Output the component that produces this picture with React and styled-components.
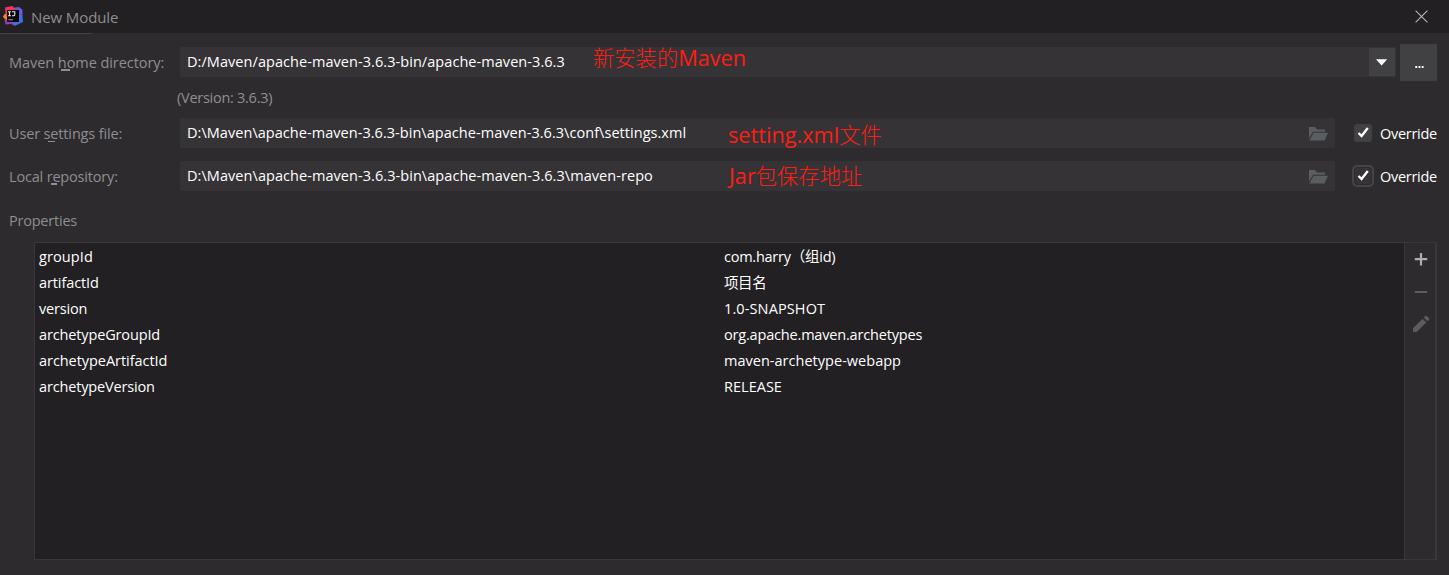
import React from "react";
import styled, { createGlobalStyle } from "styled-components";

const Global = createGlobalStyle`
  * { box-sizing: border-box; }
  body { margin: 0; background: #2d2b2e; }
`;

const Dialog = styled.div`
  height: 575px;
  display: flex;
  flex-direction: column;
  background: #2d2b2e;
  color: #fff;
  font: 14.5px/20px "Open Sans", "Noto Sans CJK SC", sans-serif;
  white-space: pre;
  overflow: hidden;
`;

const TitleBar = styled.header`
  height: 33px;
  flex: none;
  display: flex;
  align-items: center;
  padding: 0 21px 1px 3px;
  background: #222023;
`;

const Title = styled.span`
  flex: 1;
  margin-left: 8px;
  padding-top: 2px;
  font-size: 15px;
  letter-spacing: -0.1px;
  color: #8f8e90;
`;

const Accent = styled.div`
  width: 92px;
  height: 1px;
  flex: none;
  background: #414043;
`;

const Form = styled.section`
  display: flex;
  flex-direction: column;
  padding: 10px 12px 0 9px;
`;

const FormRow = styled.div`
  display: flex;
  align-items: center;
  height: ${(p) => p.$height}px;
  margin-bottom: ${(p) => p.$gap || 0}px;
`;

const Text = styled.span`
  letter-spacing: ${(p) => p.$track || 0}px;
  padding-top: ${(p) => p.$down || 0}px;
`;

const Label = styled(Text)`
  width: 171px;
  flex: none;
  color: #8f8e90;
`;

const Mnemonic = styled.span`
  position: relative;
  &::after {
    content: "";
    position: absolute;
    left: ${(p) => p.$inset || 0}px;
    bottom: ${(p) => p.$drop || 0}px;
    width: ${(p) => p.$width}px;
    height: ${(p) => p.$thick || 1}px;
    background: #8f8e90;
  }
`;

const Version = styled(Text)`
  margin: 7px 0 10px 168px;
  color: #8f8e90;
`;

const Field = styled.div`
  width: ${(p) => p.$width}px;
  height: 30px;
  flex: none;
  display: flex;
  align-items: center;
  padding-left: 7px;
  background: #353336;
  border-radius: 1px;
`;

const ComboField = styled(Field)`
  margin-bottom: 1px;
`;

const FieldValue = styled(Text)`
  width: ${(p) => p.$width}px;
  flex: none;
`;

const Note = styled.span`
  flex: 1;
  display: flex;
  align-items: baseline;
  padding-top: ${(p) => p.$down || 0}px;
  padding-bottom: ${(p) => p.$up || 0}px;
  font-size: 21.7px;
  line-height: 28px;
  color: #ff1d13;
`;

const Han = styled.span`
  font-family: "Noto Sans CJK SC", sans-serif;
  font-weight: 300;
  font-size: 21.3px;
`;

const DropButton = styled.div`
  width: 26px;
  height: 28px;
  margin-right: 1px;
  display: flex;
  align-items: center;
  justify-content: center;
  background: #414043;
`;

const MoreButton = styled.div`
  width: 37px;
  height: 37px;
  margin-left: 4px;
  display: flex;
  align-items: center;
  justify-content: center;
  padding-top: 3px;
  background: #414043;
`;

const FolderSlot = styled.div`
  width: 26px;
  padding-top: 1px;
  display: flex;
`;

const Check = styled.div`
  width: 22px;
  height: 22px;
  flex: none;
  margin: 0 6px 0 17px;
  display: flex;
  align-items: center;
  justify-content: center;
  border-radius: 5px;
  background: ${(p) => (p.$focused ? "#454447" : "transparent")};
`;

const CheckBox = styled.div`
  width: 18px;
  height: 18px;
  display: flex;
  align-items: center;
  justify-content: center;
  border-radius: 3px;
  background: ${(p) => (p.$focused ? "#353336" : "#414043")};
  border: ${(p) => (p.$focused ? "1px solid #2d2b2e" : "none")};
`;

const Heading = styled(Text)`
  margin-top: 20px;
  color: #8f8e90;
`;

const Panel = styled.section`
  width: 1403px;
  height: 318px;
  margin: 11px 0 0 34px;
  display: flex;
  border: 1px solid #39373a;
  border-right-width: 2px;
`;

const Table = styled.div`
  flex: 1;
  display: grid;
  grid-template-columns: 685px 1fr;
  grid-auto-rows: 26px;
  align-items: center;
  padding: 1px 0 0 4px;
  background: #222023;
`;

const Tools = styled.aside`
  width: 31px;
  display: flex;
  flex-direction: column;
  align-items: center;
  padding: 8px 0 0 1px;
  gap: 16px;
  border-left: 1px solid #39373a;
`;

const AppLogo = () => (
  <svg width="20" height="20" viewBox="0 0 20 20">
    <path d="M2 1.500 9 0l4 3-3 13-8.500-3L0 10.500l2.500-3z" fill="#fc2f5d" />
    <path d="M0 10.500 2.200 7.500 5 12l-2 2z" fill="#f98419" />
    <path d="M1.500 14 10 14l1 5.500-3-1.500-5.500.500z" fill="#9a3ab0" />
    <path d="M12 1.500 19 3l1 13-8.500 4-3-5z" fill="#3d70e0" />
    <path d="M12 1.500 16 1l3.500 3-.5 7-4-5z" fill="#6a58da" />
    <rect x="4" y="4" width="12" height="12" fill="#080808" />
    <path d="M5 5.700h3M6.500 5.700v4M5 9.700h3M9 5.700h2.800v2.800q0 1.200-1.200 1.200h-1.600" fill="none" stroke="#e8e8e8" strokeWidth="1.100" />
    <path d="M5.500 13.800h4.500" stroke="#aaa" strokeWidth="1" />
  </svg>
);

const CloseIcon = () => (
  <svg width="13" height="13" viewBox="0 0 13 13">
    <path d="M.6.600l11.800 11.800M12.400.600.600 12.400" stroke="#b4b3b5" strokeWidth="1.150" />
  </svg>
);

const FolderIcon = () => (
  <svg width="19" height="14" viewBox="0 0 19 14">
    <path d="M0 0h6l2 2.500h8v2.200H4L0 11.500z" fill="#5b5e61" />
    <path d="M4.600 5.700H19L15.500 13.500H.3z" fill="#5b5e61" />
  </svg>
);

const Tick = () => (
  <svg width="12" height="12" viewBox="0 0 12 12">
    <path d="M1.500 6 4.600 9 10.800 1" fill="none" stroke="#fff" strokeWidth="2.400" />
  </svg>
);

const Arrow = () => (
  <svg width="12" height="7" viewBox="0 0 12 7">
    <path d="M0 .200h11.200L5.600 6.600z" fill="#fff" />
  </svg>
);

const Dots = () => (
  <svg width="10" height="10" viewBox="0 0 10 10">
    <path d="M1.300 7h1.900v2H1.300zM4.500 7h1.900v2h-1.900zM7.700 7h1.900v2h-1.900z" fill="#fff" />
  </svg>
);

const PlusIcon = () => (
  <svg width="16" height="16" viewBox="0 0 16 16">
    <path d="M8 2v12.500M1.800 8.200h12.500" stroke="#adacae" strokeWidth="2.200" />
  </svg>
);

const MinusIcon = () => (
  <svg width="16" height="16" viewBox="0 0 16 16">
    <path d="M1.800 9h12.500" stroke="#5c5b5d" strokeWidth="2" />
  </svg>
);

const PencilIcon = () => (
  <svg width="18" height="18" viewBox="0 0 18 18">
    <path d="M1 13.300 10.600 3.700l3.700 3.700L4.700 17H1z" fill="#5c5b5d" />
    <path d="m11.700 2.600 1.600-1.600q.7-.6 1.400 0l2.300 2.300q.6.700 0 1.400l-1.600 1.600z" fill="#5c5b5d" />
  </svg>
);

const Override = ({ focused }) => (
  <>
    <Check $focused={focused}>
      <CheckBox $focused={focused}><Tick /></CheckBox>
    </Check>
    <Text $track={-0.28} $down={2}>Override</Text>
  </>
);

const properties = [
  ["groupId", 0.1, <>com.harry（组id)</>, -0.25],
  ["artifactId", -0.1, "项目名", -0.4],
  ["version", -0.18, "1.0-SNAPSHOT", 0.12],
  ["archetypeGroupId", -0.14, "org.apache.maven.archetypes", -0.18],
  ["archetypeArtifactId", -0.05, "maven-archetype-webapp", 0.02],
  ["archetypeVersion", -0.16, "RELEASE", 0.02],
];

export default function App() {
  return (
    <Dialog>
      <Global />
      <TitleBar>
        <AppLogo />
        <Title>New Module</Title>
        <CloseIcon />
      </TitleBar>
      <Accent />
      <Form>
        <FormRow $height={37}>
          <Label $track={-0.06}>Maven <Mnemonic $inset={3} $drop={1} $width={9} $thick={2}>h</Mnemonic>ome directory:</Label>
          <ComboField $width={1216}>
            <FieldValue $width={406} $track={0.06}>D:/Maven/apache-maven-3.6.3-bin/apache-maven-3.6.3</FieldValue>
            <Note $up={9}><Han>新安装的</Han>Maven</Note>
            <DropButton><Arrow /></DropButton>
          </ComboField>
          <MoreButton><Dots /></MoreButton>
        </FormRow>
        <Version $track={-0.27}>(Version: 3.6.3)</Version>
        <FormRow $height={30} $gap={13}>
          <Label $track={-0.15} $down={2}>User s<Mnemonic $inset={-2} $drop={1} $width={7}>e</Mnemonic>ttings file:</Label>
          <Field $width={1155}>
            <FieldValue $width={541} $track={0.045}>{"D:\\Maven\\apache-maven-3.6.3-bin\\apache-maven-3.6.3\\conf\\settings.xml"}</FieldValue>
            <Note $down={2}>setting.xml<Han>文件</Han></Note>
            <FolderSlot><FolderIcon /></FolderSlot>
          </Field>
          <Override />
        </FormRow>
        <FormRow $height={30}>
          <Label $track={-0.18} $down={2}>Local r<Mnemonic $inset={-1} $drop={1} $width={6} $thick={2}>e</Mnemonic>pository:</Label>
          <Field $width={1155}>
            <FieldValue $width={542} $track={0.06}>{"D:\\Maven\\apache-maven-3.6.3-bin\\apache-maven-3.6.3\\maven-repo"}</FieldValue>
            <Note $up={2}>Jar<Han>包保存地址</Han></Note>
            <FolderSlot><FolderIcon /></FolderSlot>
          </Field>
          <Override focused />
        </FormRow>
        <Heading $track={-0.22}>Properties</Heading>
      </Form>
      <Panel>
        <Table>
          {properties.map(([name, nameTrack, value, valueTrack]) => (
            <React.Fragment key={name}>
              <Text $track={nameTrack}>{name}</Text>
              <Text $track={valueTrack}>{value}</Text>
            </React.Fragment>
          ))}
        </Table>
        <Tools>
          <PlusIcon />
          <MinusIcon />
          <PencilIcon />
        </Tools>
      </Panel>
    </Dialog>
  );
}
